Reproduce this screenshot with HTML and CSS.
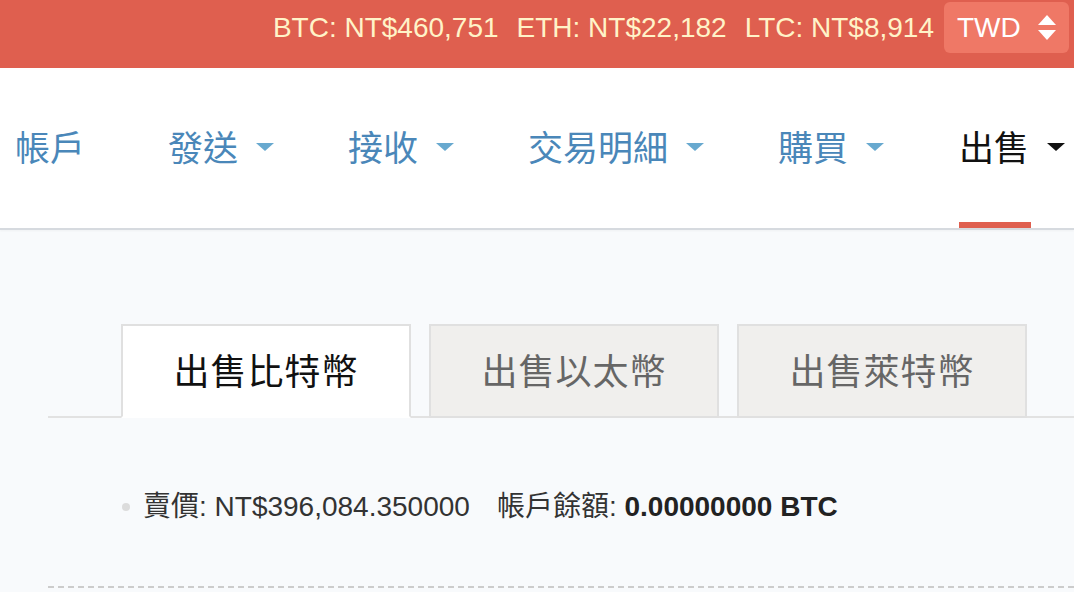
FILE: index.html
```html
<!DOCTYPE html>
<html lang="zh-Hant">
<head>
<meta charset="utf-8">
<title>出售</title>
<link rel="stylesheet" href="styles.css">
</head>
<body>
<header class="topbar">
  <div class="prices">
    <span class="price">BTC: NT$460,751</span>
    <span class="price">ETH: NT$22,182</span>
    <span class="price">LTC: NT$8,914</span>
  </div>
  <div class="currency">
    <span class="currency-label">TWD</span>
    <svg class="updown" width="20" height="28" viewBox="0 0 20 28"><polygon points="10,1 19,11 1,11" fill="#fff"/><polygon points="1,16 19,16 10,26" fill="#fff"/></svg>
  </div>
</header>
<nav class="mainnav">
  <ul class="navlist">
    <li class="navitem first">帳戶</li>
    <li class="navitem">發送<span class="caret"></span></li>
    <li class="navitem">接收<span class="caret"></span></li>
    <li class="navitem">交易明細<span class="caret"></span></li>
    <li class="navitem">購買<span class="caret"></span></li>
    <li class="navitem active"><span class="navtext">出售</span><span class="caret"></span></li>
  </ul>
</nav>
<main class="content">
  <div class="tabs">
    <div class="tab active">出售比特幣</div>
    <div class="tab">出售以太幣</div>
    <div class="tab">出售萊特幣</div>
  </div>
  <ul class="info">
    <li class="info-item"><span class="info-part">賣價: NT$396,084.350000</span><span class="info-part">帳戶餘額: <b>0.00000000 BTC</b></span></li>
  </ul>
  <div class="divider"></div>
</main>
</body>
</html>
```
FILE: styles.css
```css
* { box-sizing: border-box; }
html, body { margin: 0; padding: 0; }
body {
  background: #f8fafc;
  font-family: "Liberation Sans", Arial, "Noto Sans CJK TC", sans-serif;
  width: 1074px;
  height: 592px;
  overflow: hidden;
}
.topbar {
  height: 68px;
  background: #df5f4f;
  display: flex;
  justify-content: flex-end;
  align-items: flex-start;
  padding: 2px 5px 0 0;
}
.prices {
  display: flex;
  gap: 18px;
  height: 51px;
  align-items: center;
  margin-right: 10px;
}
.price {
  color: #fff3c8;
  font-size: 28px;
  letter-spacing: 0;
}
.currency {
  width: 125px;
  height: 51px;
  background: #ef7866;
  border-radius: 6px;
  display: flex;
  align-items: center;
  justify-content: space-between;
  padding: 0 12px 0 13px;
}
.currency-label {
  color: #fff;
  font-size: 28px;
}
.updown { display: block; margin-top: 1px; }
.mainnav {
  height: 162px;
  background: #fff;
  border-bottom: 2px solid #d6dadf;
  box-shadow: 0 1px 2px rgba(0,0,0,0.04);
  overflow: hidden;
}
.navlist {
  list-style: none;
  margin: 0;
  padding: 0 0 6px 15px;
  display: flex;
  height: 100%;
  align-items: center;
  gap: 74px;
  white-space: nowrap;
}
.navitem {
  font-family: "Noto Sans CJK TC", sans-serif;
  font-size: 35px;
  color: #4a87b9;
  display: flex;
  align-items: center;
  position: relative;
  height: 100%;
  line-height: 1;
}
.navitem.first { margin-right: 9px; }
.caret {
  display: inline-block;
  width: 0;
  height: 0;
  border-left: 9px solid transparent;
  border-right: 9px solid transparent;
  border-top: 8px solid #68a9cf;
  margin-left: 18px;
  margin-top: 4px;
}
.navitem.active { color: #111; margin-left: 1px; }
.navitem.active .caret { border-top-color: #111; }
.navtext { position: relative; }
.navitem.active::after {
  content: "";
  position: absolute;
  left: 0;
  width: 72px;
  bottom: -8px;
  height: 8px;
  background: #df5f4f;
}
.content {
  padding: 94px 0 0 48px;
}
.tabs {
  display: flex;
  gap: 18px;
  padding-left: 73px;
  border-bottom: 2px solid #e2e2e2;
  height: 94px;
}
.tab {
  width: 290px;
  height: 94px;
  border: 2px solid #e0e0e0;
  background: #f0efed;
  color: #666;
  font-family: "Noto Sans CJK TC", sans-serif;
  font-size: 36px;
  letter-spacing: 1px;
  display: flex;
  align-items: center;
  justify-content: center;
  padding-bottom: 4px;
}
.tab.active {
  background: #fff;
  color: #111;
  border-bottom-color: #fff;
}
.info {
  list-style: none;
  margin: 0;
  padding: 72px 0 0 74px;
  height: 168px;
}
.info-item {
  display: flex;
  align-items: center;
  gap: 27px;
  font-size: 28px;
  color: #333;
  letter-spacing: 0;
  position: relative;
  padding-left: 21px;
  line-height: 34px;
}
.info-item::before {
  content: "";
  position: absolute;
  left: 0;
  top: 13px;
  width: 8px;
  height: 8px;
  border-radius: 50%;
  background: #dcdcdc;
}
.info-item b { color: #222; }
.divider {
  border-top: 2px dashed #cccccc;
}
```
